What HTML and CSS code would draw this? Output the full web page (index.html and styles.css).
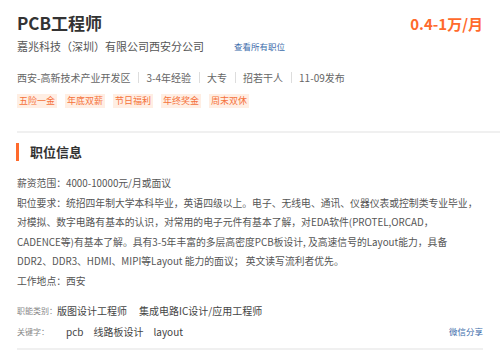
FILE: index.html
```html
<!DOCTYPE html>
<html lang="zh-CN">
<head>
    <meta charset="UTF-8">
    <meta name="viewport" content="width=device-width, initial-scale=1.0">
    <title>PCB工程师 - 嘉兆科技（深圳）有限公司西安分公司</title>
    <link rel="stylesheet" href="styles.css">
</head>
<body>
    <div class="job">
        <div class="job-head">
            <h1 class="job-title">PCB工程师</h1>
            <span class="salary">0.4-1万/月</span>
        </div>
        <div class="company">
            <span>嘉兆科技（深圳）有限公司西安分公司</span>
            <a href="#">查看所有职位</a>
        </div>
        <div class="meta">
            <span>西安-高新技术产业开发区</span>
            <span>3-4年经验</span>
            <span>大专</span>
            <span>招若干人</span>
            <span>11-09发布</span>
        </div>
        <div class="tags">
            <span>五险一金</span>
            <span>年底双薪</span>
            <span>节日福利</span>
            <span>年终奖金</span>
            <span>周末双休</span>
        </div>

        <div class="divider"></div>

        <h2 class="section-title">职位信息</h2>
        <div class="desc">
            <p>薪资范围：4000-10000元/月或面议</p>
            <p>职位要求：统招四年制大学本科毕业，英语四级以上。电子、无线电、通讯、仪器仪表或控制类专业毕业，对模拟、数字电路有基本的认识，对常用的电子元件有基本了解，对EDA软件(PROTEL,ORCAD，<br>CADENCE等)有基本了解。具有3-5年丰富的多层高密度PCB板设计, 及高速信号的Layout能力，具备<br>DDR2、DDR3、HDMI、MIPI等Layout 能力的面议； 英文读写流利者优先。</p>
            <p>工作地点：西安</p>
        </div>

        <div class="info-row">
            <span class="label">职能类别：</span>
            <span class="value">版图设计工程师</span>
            <span class="value">集成电路IC设计/应用工程师</span>
        </div>
        <div class="info-row">
            <span class="label">关键字：</span>
            <div class="keywords">
                <span>pcb</span>
                <span>线路板设计</span>
                <span>layout</span>
            </div>
            <a class="share" href="#">微信分享</a>
        </div>

        <div class="divider bottom"></div>
    </div>
</body>
</html>
```

FILE: styles.css
```css
body {
    margin: 0;
    font-family: "Noto Sans CJK SC", "Noto Sans", sans-serif;
    background-color: #ffffff;
    color: #555555;
}

.job {
    padding: 11px 17px 0 17px;
}

.job-head {
    display: flex;
    justify-content: space-between;
    align-items: center;
    height: 24px;
}

.job-title {
    margin: 0;
    font-size: 17px;
    line-height: 24px;
    font-weight: bold;
    color: #333333;
}

.salary {
    font-size: 15px;
    font-weight: bold;
    color: #ff6a2c;
}

.company {
    display: flex;
    align-items: center;
    margin-top: 2.5px;
    font-size: 11px;
    line-height: 16px;
    color: #555555;
}

.company a {
    margin-left: 30px;
    font-size: 8.5px;
    color: #3d6cab;
    text-decoration: none;
}

.meta {
    display: flex;
    margin-top: 18px;
    font-size: 10px;
    line-height: 11px;
    color: #666666;
}

.meta span + span {
    border-left: 1px solid #dddddd;
    margin-left: 8px;
    padding-left: 7px;
}

.tags {
    display: flex;
    gap: 8px;
    margin-top: 11.5px;
}

.tags span {
    padding: 0 2px;
    font-size: 9px;
    line-height: 14px;
    background-color: #ffeee3;
    color: #f5713a;
}

.divider {
    margin-top: 23px;
    margin-right: -17px;
    border-top: 2px solid #f0f0f0;
}

.divider.bottom {
    margin-top: 6.5px;
    margin-right: 0;
}

.section-title {
    margin: 10px 0 0 -1px;
    padding-left: 11px;
    border-left: 3px solid #ff6a2c;
    font-size: 13px;
    line-height: 18px;
    font-weight: bold;
    color: #333333;
}

.desc {
    margin-top: 13.25px;
    margin-right: -4px;
    font-size: 9.8px;
    line-height: 19.5px;
}

.desc p {
    margin: 0;
}

.info-row {
    display: flex;
    align-items: center;
    height: 21px;
    font-size: 10px;
    color: #444444;
}

.desc + .info-row {
    margin-top: 8.25px;
}

.info-row .label {
    font-size: 8px;
    color: #888888;
}

.info-row .value {
    margin-right: 12px;
}

.keywords {
    display: flex;
    margin-left: 12px;
}

.keywords span {
    padding: 0 5px;
}

.share {
    margin-left: auto;
    font-size: 8.5px;
    color: #3d6cab;
    text-decoration: none;
}
```
